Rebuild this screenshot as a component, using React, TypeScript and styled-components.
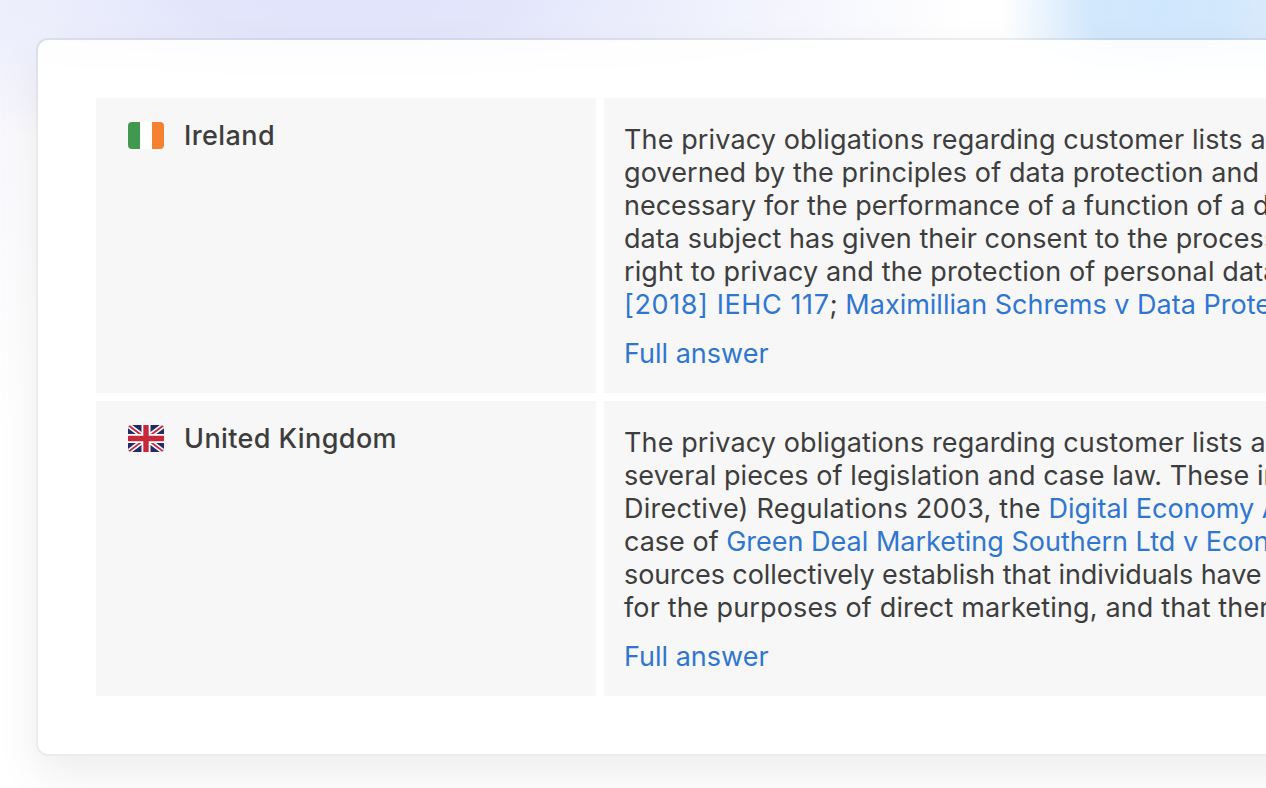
import React from 'react';
import styled, { createGlobalStyle } from 'styled-components';

const GlobalStyle = createGlobalStyle`
  html, body {
    margin: 0;
    padding: 0;
    height: 100%;
    overflow: hidden;
    background: #fff;
  }
`;

const Page = styled.div`
  width: 1266px;
  height: 788px;
  overflow: hidden;
  box-sizing: border-box;
  padding: 38px 0 0 36px;
  font-family: Inter, 'Liberation Sans', sans-serif;
  color: #3d3d3d;
  background:
    radial-gradient(ellipse 160px 100px at 1160px 10px, #cfe7fd 0%, #d2e8fc 45%, rgba(210, 232, 252, 0) 100%),
    radial-gradient(ellipse 120px 90px at 1290px 20px, #dce4fa 0%, rgba(220, 228, 250, 0) 100%),
    radial-gradient(ellipse 620px 160px at 350px 0px, #e0e3fb 0%, #e3e6fb 25%, rgba(227, 230, 251, 0) 100%),
    radial-gradient(ellipse 50px 300px at 0px 120px, #f8f8fd 0%, rgba(248, 248, 253, 0) 100%);
`;

const Card = styled.div`
  box-sizing: border-box;
  width: 1400px;
  height: 718px;
  padding: 58px;
  border: 2px solid rgba(30, 30, 60, 0.085);
  border-radius: 12px;
  background-clip: padding-box;
  background-image: linear-gradient(180deg, rgba(255, 255, 255, 0.88) 0%, #fff 60px);
  box-shadow: 0 18px 44px rgba(0, 0, 0, 0.075);
`;

const Table = styled.div`
  display: grid;
  grid-template-columns: 500px 1fr;
  grid-auto-rows: 295px;
  gap: 8px;
`;

const CountryCell = styled.div`
  display: flex;
  align-items: flex-start;
  gap: 20px;
  padding: 22px 32px;
  background: #f7f7f7;
`;

const CountryName = styled.span`
  font-size: 27px;
  line-height: 32px;
  font-weight: 450;
  letter-spacing: 0.4px;
  color: #3d3d3d;
`;

const Flag = styled.svg`
  flex: none;
  width: 36px;
  height: 27px;
  margin-top: 2px;
  border-radius: 4px;
  overflow: hidden;
`;

const AnswerCell = styled.div`
  padding: 25px 20px 0;
  background: #f7f7f7;
`;

const Line = styled.div<{ $tracking?: number }>`
  font-size: 27px;
  line-height: 33px;
  letter-spacing: ${(p) => p.$tracking ?? 0}px;
  white-space: nowrap;
`;

const Figures = styled.span`
  letter-spacing: 0.25px;
`;

const Anchor = styled.a`
  color: #2f76d2;
  text-decoration: none;
`;

const Citation = styled(Anchor)`
  letter-spacing: 0.6px;
`;

const FullAnswer = styled(Anchor)`
  display: block;
  margin-top: 16px;
  font-size: 27px;
  line-height: 33px;
`;

const IrelandFlag = () => (
  <Flag viewBox="0 0 36 27">
    <rect width="12" height="27" fill="#43984f" />
    <rect x="12" width="12" height="27" fill="#fff" />
    <rect x="24" width="12" height="27" fill="#f58232" />
  </Flag>
);

const UkFlag = () => (
  <Flag viewBox="0 0 36 27">
    <rect width="36" height="27" fill="#252a68" />
    <path d="M0 0L36 27M36 0L0 27" stroke="#fff" strokeWidth="5" />
    <path d="M0 0L18 13.5M36 27L18 13.5M36 0L18 13.5M0 27L18 13.5" stroke="#c8283c" strokeWidth="1.8" />
    <path d="M18 0V27M0 13.5H36" stroke="#fff" strokeWidth="9" />
    <path d="M18 0V27M0 13.5H36" stroke="#c8283c" strokeWidth="5.4" />
  </Flag>
);

const App = () => (
  <Page>
    <GlobalStyle />
    <Card>
      <Table>
        <CountryCell>
          <IrelandFlag />
          <CountryName>Ireland</CountryName>
        </CountryCell>
        <AnswerCell>
          <Line $tracking={0.12}>The privacy obligations regarding customer lists are</Line>
          <Line $tracking={0.1}>governed by the principles of data protection and privacy</Line>
          <Line>necessary for the performance of a function of a data</Line>
          <Line $tracking={0.05}>data subject has given their consent to the processing</Line>
          <Line $tracking={0.12}>right to privacy and the protection of personal data</Line>
          <Line>
            <Citation href="#">[2018] IEHC 117</Citation>; <Anchor href="#">Maximillian Schrems v Data Protection</Anchor>
          </Line>
          <FullAnswer href="#">Full answer</FullAnswer>
        </AnswerCell>
        <CountryCell>
          <UkFlag />
          <CountryName>United Kingdom</CountryName>
        </CountryCell>
        <AnswerCell>
          <Line $tracking={0.12}>The privacy obligations regarding customer lists are</Line>
          <Line $tracking={0.08}>several pieces of legislation and case law. These include</Line>
          <Line>
            <Figures>Directive) Regulations 2003, the </Figures><Anchor href="#">Digital Economy Act</Anchor>
          </Line>
          <Line>
            case of <Anchor href="#">Green Deal Marketing Southern Ltd v Economy</Anchor>
          </Line>
          <Line $tracking={-0.1}>sources collectively establish that individuals have</Line>
          <Line $tracking={0.15}>for the purposes of direct marketing, and that there</Line>
          <FullAnswer href="#">Full answer</FullAnswer>
        </AnswerCell>
      </Table>
    </Card>
  </Page>
);

export default App;
